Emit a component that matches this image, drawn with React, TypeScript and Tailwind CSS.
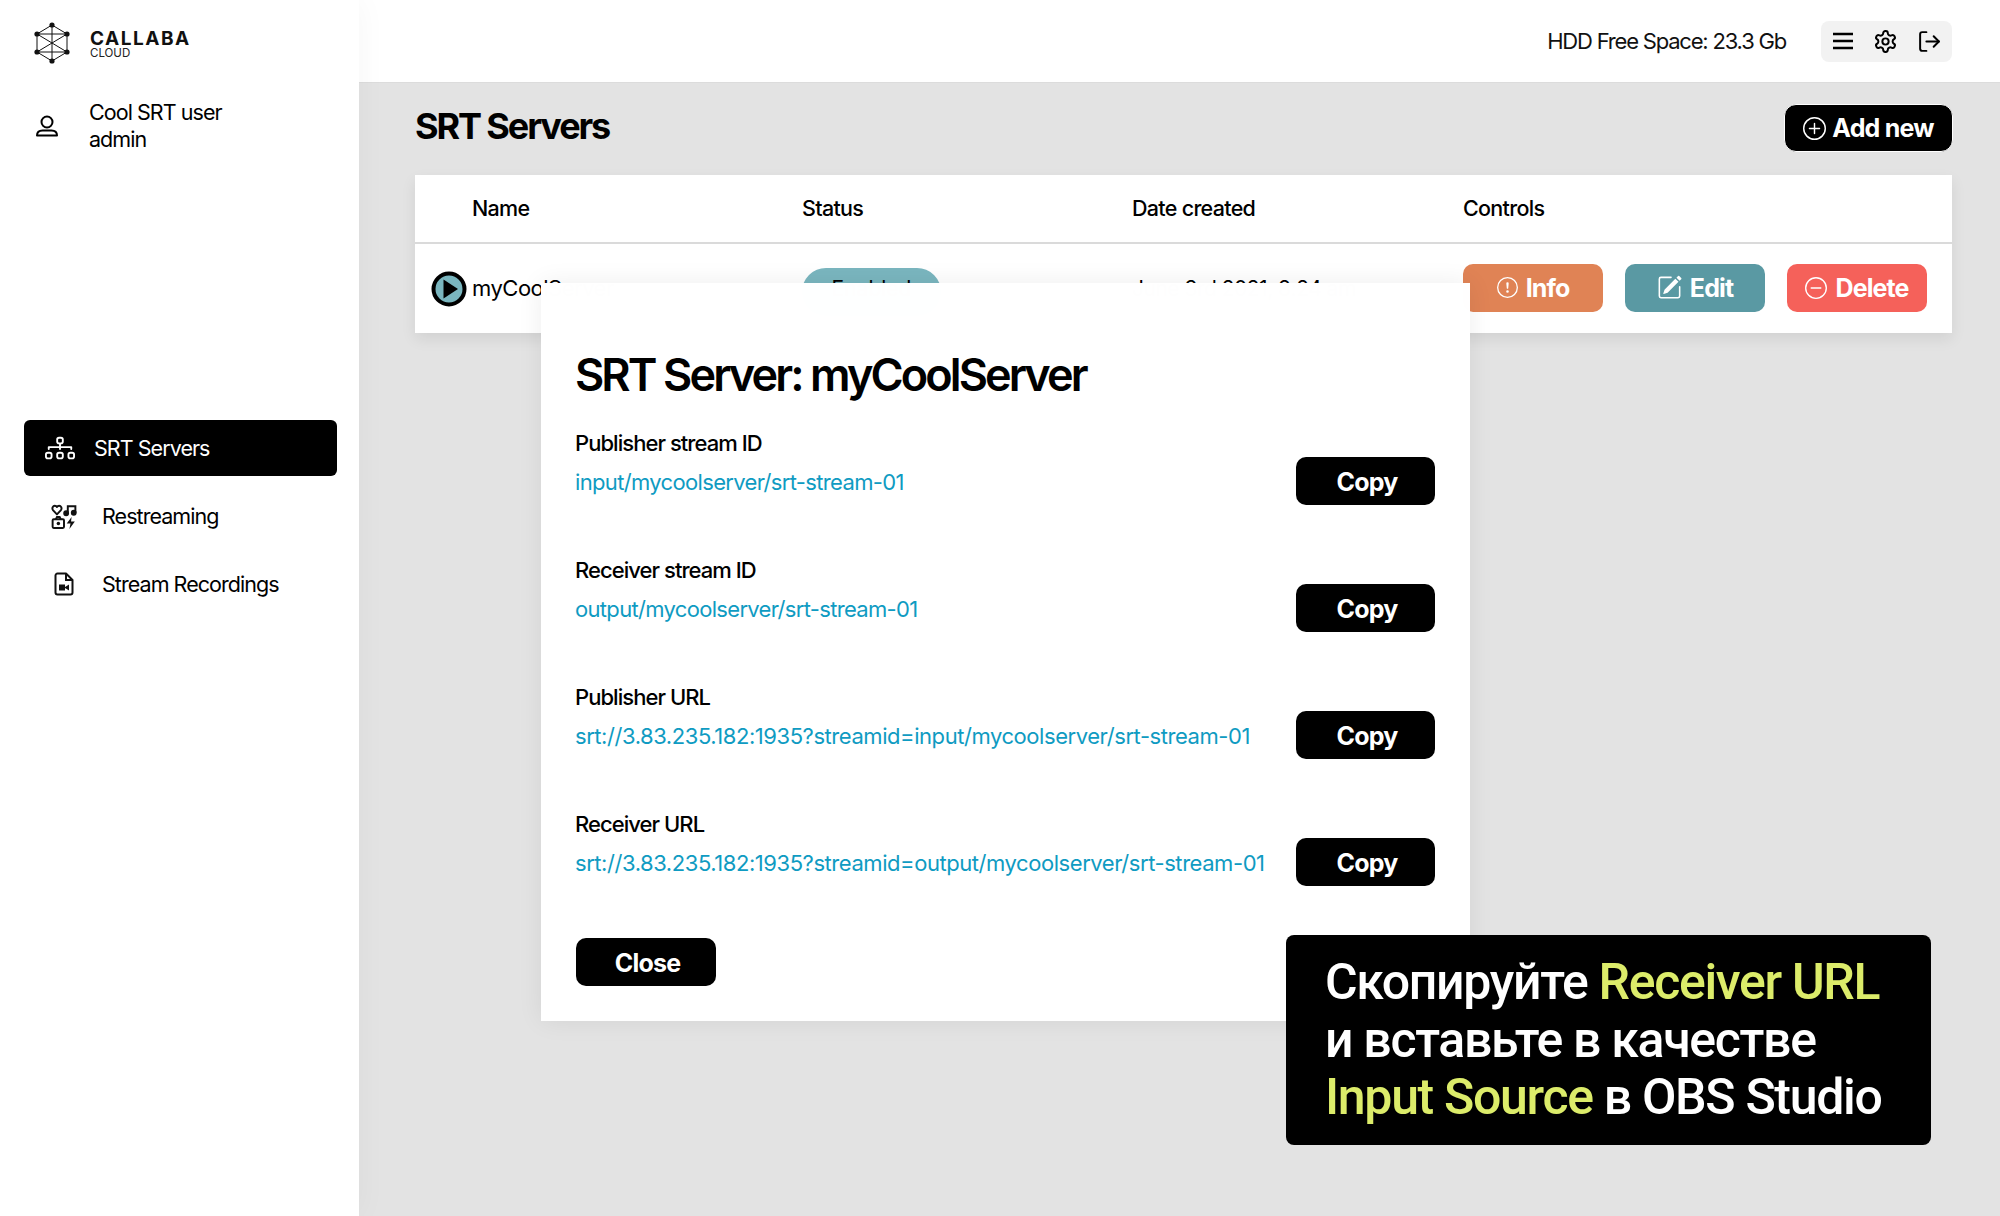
import React from "react";
import { BsDiagram3, BsExclamationCircle, BsPencilSquare, BsDashCircle, BsPlusCircle } from "react-icons/bs";
import { LuSettings, LuLogOut } from "react-icons/lu";

const infoRows = [
  { label: "Publisher stream ID", value: "input/mycoolserver/srt-stream-01", tracking: "tracking-[-0.66px]" },
  { label: "Receiver stream ID", value: "output/mycoolserver/srt-stream-01", tracking: "tracking-[-0.68px]" },
  { label: "Publisher URL", value: "srt://3.83.235.182:1935?streamid=input/mycoolserver/srt-stream-01", tracking: "tracking-[-0.44px]" },
  { label: "Receiver URL", value: "srt://3.83.235.182:1935?streamid=output/mycoolserver/srt-stream-01", tracking: "tracking-[-0.44px]" },
];

function Logo() {
  const pts = [
    [18, 3],
    [33, 12],
    [33, 30],
    [18, 39],
    [3, 30],
    [3, 12],
  ];
  return (
    <svg width="36" height="42" viewBox="0 0 36 42" fill="none" stroke="#111" strokeWidth="1">
      <polygon points="18,3 33,12 33,30 18,39 3,30 3,12" />
      <path d="M18 3V39M3 12H33M3 30H33M3 12L33 30M33 12L3 30" />
      {pts.map(([x, y]) => (
        <circle key={x + "-" + y} cx={x} cy={y} r="2.600" fill="#111" stroke="none" />
      ))}
    </svg>
  );
}

function UserIcon() {
  return (
    <svg width="24" height="24" viewBox="0 0 24 24" fill="none" stroke="#000" strokeWidth="2">
      <circle cx="12" cy="8" r="5.500" />
      <path d="M2 21.500c0-3.500 2.500-5 5.500-5h9c3 0 5.500 1.500 5.500 5z" strokeLinejoin="round" />
    </svg>
  );
}

function RestreamIcon() {
  return (
    <svg width="26" height="26" viewBox="0 0 24 24" fill="none" stroke="#111" strokeWidth="1.800">
      <path d="M5.500 10.500 1.800 6.500C.6 4.800 1.800 2.500 3.500 2.500c1 0 1.600.5 2 1.200.4-.7 1-1.200 2-1.200 1.700 0 2.900 2.300 1.700 4z" strokeLinejoin="round" />
      <path d="M15.500 9V3h7v6" />
      <circle cx="14" cy="9.500" r="1.800" fill="#111" />
      <circle cx="21" cy="9" r="1.800" fill="#111" />
      <rect x="1.500" y="15" width="10.500" height="8" rx="1" />
      <path d="M4.500 15l1-2h2.500l1 2" />
      <circle cx="6.800" cy="19" r="1.600" fill="#111" stroke="none" />
      <path d="M19 13l-4.500 6H18l-1 5 5-7h-3.500z" fill="#111" stroke="none" />
    </svg>
  );
}

function RecordingIcon() {
  return (
    <svg width="20" height="24" viewBox="0 0 20 24" fill="none" stroke="#111" strokeWidth="2">
      <path d="M12 1.500H3.500a2 2 0 0 0-2 2v17a2 2 0 0 0 2 2h13a2 2 0 0 0 2-2V8z" strokeLinejoin="round" />
      <path d="M12 1.500V8h6.500" />
      <path d="M5 12.500h6v6H5zM11 15l4-2.500v6L11 16z" fill="#111" stroke="none" />
    </svg>
  );
}

function PlayIcon() {
  return (
    <svg width="36" height="36" viewBox="0 0 36 36" className="shrink-0">
      <circle cx="18" cy="18" r="15.500" fill="#7ab6bf" stroke="#000" strokeWidth="4" />
      <path d="M12.500 8.500 27 18 12.500 27.500z" fill="#000" />
    </svg>
  );
}

function ActionButton({ color, icon, label }: { color: string; icon: React.ReactNode; label: string }) {
  return (
    <button type="button" className={`flex h-12 w-[140px] items-center justify-center gap-[8px] rounded-[10px] pt-[3px] text-[25px] font-bold tracking-[-0.9px] text-white ${color}`}>
      <span className="-mt-[3px]">{icon}</span>
      {label}
    </button>
  );
}

export default function App() {
  return (
    <div className="relative flex h-[1216px] w-[2000px] overflow-hidden bg-[#e3e3e3] font-['Inter',sans-serif] text-black">
      <aside className="relative z-10 w-[359px] shrink-0 bg-white pt-[22px] shadow-[0_0_30px_rgba(0,0,0,0.04)]">
        <div className="flex items-center pl-[34px]">
          <Logo />
          <div className="ml-[20px] mt-[2px]">
            <div className="text-[19px] leading-[20px] font-bold tracking-[1.500px] text-[#111]">CALLABA</div>
            <div className="-mt-[2px] text-[11.500px] leading-[12px] text-[#222]">CLOUD</div>
          </div>
        </div>
        <div className="mt-[35px] flex items-center pl-[35px]">
          <UserIcon />
          <div className="ml-[30px] text-[21.500px] leading-[27px] tracking-[-0.95px]">
            <div>Cool SRT user</div>
            <div>admin</div>
          </div>
        </div>
        <nav className="mt-[267px] flex flex-col px-[24px]">
          <div className="flex h-[56px] w-[313px] items-center rounded-[6px] bg-black pl-[21px] text-[21.500px] tracking-[-0.95px] text-white">
            <BsDiagram3 size={30} />
            <span className="ml-[19px]">SRT Servers</span>
          </div>
          <div className="mt-[12px] flex h-[56px] items-center pl-[27px] text-[21.500px] tracking-[-0.95px]">
            <RestreamIcon />
            <span className="ml-[25px]">Restreaming</span>
          </div>
          <div className="mt-[12px] flex h-[56px] items-center pl-[30px] text-[21.500px] tracking-[-0.95px]">
            <RecordingIcon />
            <span className="ml-[28px]">Stream Recordings</span>
          </div>
        </nav>
      </aside>

      <main className="flex min-w-0 flex-1 flex-col">
        <header className="flex h-[83px] items-center justify-end border-b border-[#dcdcdc] bg-white pr-[48px]">
          <span className="text-[22px] tracking-[-1.2px] text-[#111]">HDD Free Space: 23.3 Gb</span>
          <div className="ml-[35px] flex h-[41px] w-[131px] items-center justify-between rounded-[8px] bg-[#f2f2f2] pl-[11px] pr-[10px]">
            <svg width="22" height="18" viewBox="0 0 22 18" stroke="#000" strokeWidth="2.500">
              <path d="M1 2H21M1 9H21M1 16H21" />
            </svg>
            <LuSettings size={25} strokeWidth={1.900} />
            <LuLogOut size={25} strokeWidth={1.900} />
          </div>
        </header>

        <div className="pl-[56px] pr-[47px]">
          <div className="flex h-[92px] items-start justify-between">
            <h1 className="mt-[23px] text-[36px] leading-[40px] font-bold tracking-[-2.100px]">SRT Servers</h1>
            <button type="button" className="mt-[21px] flex h-[48px] w-[169px] items-center justify-center gap-[6px] rounded-[12px] border border-white bg-black pt-[1px] text-[25px] font-bold tracking-[-0.8px] text-white">
              <BsPlusCircle size={23} />
              Add new
            </button>
          </div>

          <div className="mr-px bg-white shadow-[0_6px_14px_rgba(0,0,0,0.08)]">
            <div className="grid h-[69px] grid-cols-[387px_330px_330px_1fr] items-center border-b-2 border-[#dadada] pl-[57px] text-[21.500px] font-medium tracking-[-0.7px]">
              <span className="col-start-1 w-[330px]">Name</span>
              <span className="-ml-[57px]">Status</span>
              <span className="-ml-[57px]">Date created</span>
              <span className="-ml-[56px]">Controls</span>
            </div>
            <div className="flex h-[89px] items-center">
              <div className="flex w-[387px] items-center gap-[5px] pl-[16px] text-[22px] tracking-[-0.5px]">
                <PlayIcon />
                myCoolServer
              </div>
              <div className="w-[330px]">
                <span className="mt-[6px] flex h-[48px] w-[139px] items-center justify-center rounded-[24px] bg-[#7ab6bf] pb-[6px] text-[21px]">Enabled</span>
              </div>
              <div className="w-[331px] text-[21px] tracking-[-0.5px]">June 3rd 2021, 8:24 am</div>
              <div className="mb-[2px] flex gap-[22px]">
                <ActionButton color="bg-[#e08355]" icon={<BsExclamationCircle size={21} />} label="Info" />
                <ActionButton color="bg-[#5a99a3]" icon={<BsPencilSquare size={25} />} label="Edit" />
                <ActionButton color="bg-[#f5615a]" icon={<BsDashCircle size={22} />} label="Delete" />
              </div>
            </div>
          </div>
        </div>
      </main>

      <div className="absolute left-[541px] top-[283px] z-20 flex h-[738px] w-[929px] flex-col bg-white/[0.995] pl-[34px] pr-[35px] shadow-[0_0_24px_rgba(0,0,0,0.07)]">
        <h2 className="mt-[62px] text-[45px] leading-[60px] font-semibold tracking-[-2.900px]">SRT Server: myCoolServer</h2>
        <div className="mt-[24px] flex flex-col gap-[47px]">
          {infoRows.map((row) => (
            <div key={row.label} className="flex h-[80px] items-start justify-between">
              <div className="min-w-0">
                <div className="text-[22px] leading-[28px] font-medium tracking-[-0.95px]">{row.label}</div>
                <div className={`mt-[11px] text-[22px] leading-[28px] whitespace-nowrap text-[#0f9bc2] ${row.tracking}`}>{row.value}</div>
              </div>
              <button type="button" className="mt-[28px] h-[48px] w-[139px] shrink-0 rounded-[10px] bg-black pl-[3px] pt-[3px] text-[25px] font-bold tracking-[-0.8px] text-white">
                Copy
              </button>
            </div>
          ))}
        </div>
        <button type="button" className="ml-px mt-[48px] h-[48px] w-[140px] rounded-[10px] bg-black pl-[3px] pt-[3px] text-[25px] font-bold tracking-[-0.8px] text-white">
          Close
        </button>
      </div>

      <div className="absolute left-[1286px] top-[935px] z-30 h-[210px] w-[645px] rounded-[8px] bg-black pl-[39px] pt-[19px] font-['Roboto',sans-serif] text-[50px] leading-[57.500px] font-medium tracking-[-1.320px] text-white">
        <div>
          Скопируйте <span className="text-[#dcec6a]">Receiver URL</span>
        </div>
        <div>и вставьте в качестве</div>
        <div>
          <span className="text-[#dcec6a]">Input Source</span> в OBS Studio
        </div>
      </div>
    </div>
  );
}
